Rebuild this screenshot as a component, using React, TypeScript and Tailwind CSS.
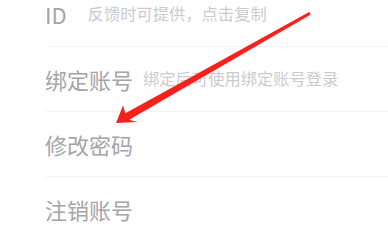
import React from "react";

const font = { fontFamily: '"Noto Sans CJK SC", "Noto Sans", sans-serif' };

function Row({ label, sub, subGap, first }: { label: string; sub?: string; subGap?: string; first?: boolean }) {
  return (
    <div className={first ? "h-[46px] pb-[18px] flex items-center pl-[45px]" : "h-16 flex items-center pl-[45px]"}>
      <span className="text-[22px] leading-[1.3] text-[#a4a4a9]">{label}</span>
      {sub && <span className={`text-[16.3px] leading-[1.3] text-[#cbcbcf] ${subGap}`}>{sub}</span>}
    </div>
  );
}

function Divider() {
  return <div className="ml-[46px] h-px bg-[#f1f1f3]" />;
}

export default function App() {
  return (
    <div className="relative w-[388px] h-[233px] overflow-hidden bg-white" style={font}>
      <div>
        <Row first label="ID" sub="反馈时可提供，点击复制" subGap="ml-[21px]" />
        <Divider />
        <Row label="绑定账号" sub="绑定后可使用绑定账号登录" subGap="ml-[10px]" />
        <Divider />
        <Row label="修改密码" />
        <Divider />
        <Row label="注销账号" />
      </div>
      <svg className="absolute inset-0 pointer-events-none" width="388" height="233" viewBox="0 0 388 233">
        <polygon
          points="116,123 123,105.5 125.4,113.2 309.2,11.9 310.8,14.6 129.2,119.8 137.5,122"
          fill="#f8201a"
        />
      </svg>
    </div>
  );
}
